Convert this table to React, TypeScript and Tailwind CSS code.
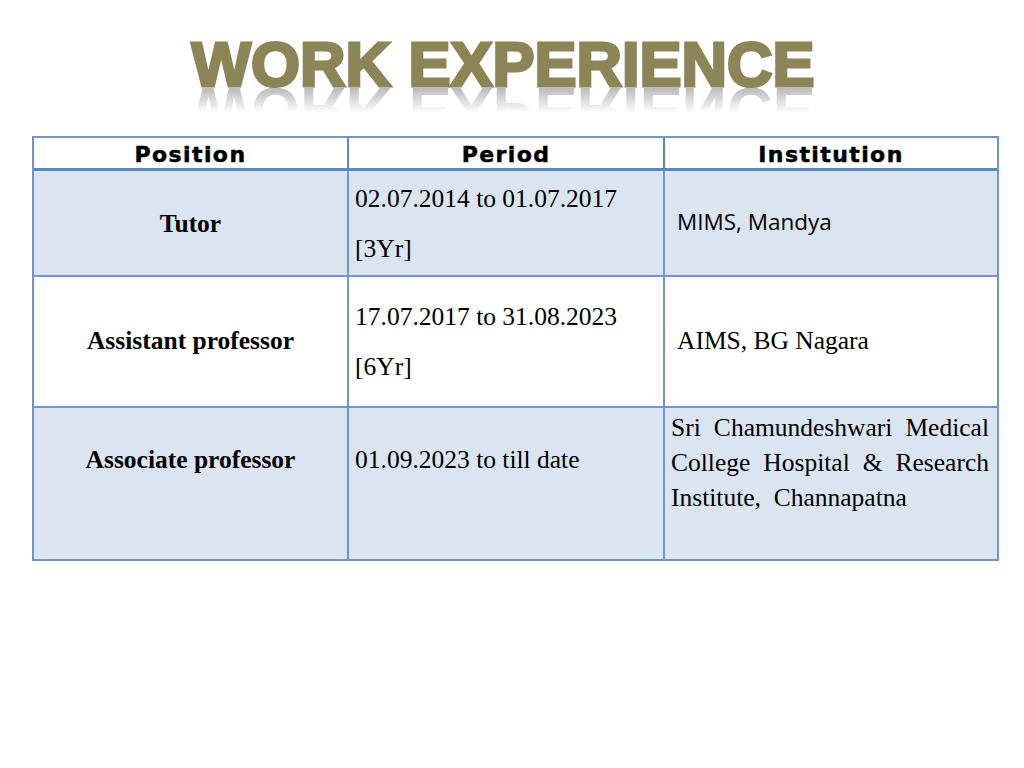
const serif = "[font-family:'Liberation_Serif','Times_New_Roman',serif]";

function Title() {
  return (
    <div className="flex justify-center pt-[33px] pr-[18px] h-[136px]">
      <div className="relative h-[62px]">
        <h1 className="relative z-10 text-[63px] leading-[62px] font-bold whitespace-nowrap text-[#8b8557] [font-family:'Liberation_Sans',Arial,sans-serif] [-webkit-text-stroke:3px_#8b8557] [text-shadow:0_0_1px_#5f5b3c]">
          WORK EXPERIENCE
        </h1>
        <div
          aria-hidden
          className="absolute left-0 top-0 text-[63px] leading-[62px] font-bold whitespace-nowrap origin-[50%_54px] -scale-y-100 text-transparent bg-clip-text bg-[linear-gradient(to_bottom,rgba(255,255,255,0)_28px,rgba(165,165,165,0.8)_54px)] [font-family:'Liberation_Sans',Arial,sans-serif]"
        >
          WORK EXPERIENCE
        </div>
      </div>
    </div>
  );
}

const head =
  "flex items-center justify-center pt-[2px] text-[22px] font-bold tracking-[1.4px] text-black [font-family:'DejaVu_Sans',sans-serif] [-webkit-text-stroke:0.5px_#000]";

export default function App() {
  return (
    <div className="w-[1024px] h-[768px] bg-white overflow-hidden">
      <Title />
      <div className="ml-[32px] w-[967px] border-2 border-[#7095c8] grid grid-cols-[315px_316px_332px]">
        {/* header */}
        <div className={`${head} h-[33px] border-r-2 border-b-[3px] border-[#5d87c2]`}>Position</div>
        <div className={`${head} h-[33px] border-r-2 border-b-[3px] border-[#5d87c2]`}>Period</div>
        <div className={`${head} h-[33px] border-b-[3px] border-[#5d87c2]`}>Institution</div>

        {/* row 1 */}
        <div className={`${serif} h-[106px] bg-[#dbe5f1] border-r-2 border-b-2 border-[#7095c8] flex items-center justify-center pt-[2px] text-[25.5px] font-bold`}>
          Tutor
        </div>
        <div className={`${serif} h-[106px] bg-[#dbe5f1] border-r-2 border-b-2 border-[#7095c8] flex flex-col justify-center gap-[22px] pl-[6px] pt-[2px] text-[25.5px] leading-[28px]`}>
          <span>02.07.2014 to 01.07.2017</span>
          <span>[3Yr]</span>
        </div>
        <div className="h-[106px] bg-[#dbe5f1] border-b-2 border-[#7095c8] flex items-center pl-[12px] pb-[2px] text-[22.5px] [font-family:'Open_Sans',sans-serif]">
          MIMS, Mandya
        </div>

        {/* row 2 */}
        <div className={`${serif} h-[131px] bg-white border-r-2 border-b-2 border-[#7095c8] flex items-center justify-center text-[25.5px] font-bold`}>
          Assistant professor
        </div>
        <div className={`${serif} h-[131px] bg-white border-r-2 border-b-2 border-[#7095c8] flex flex-col justify-center gap-[22px] pl-[6px] text-[25.5px] leading-[28px]`}>
          <span>17.07.2017 to 31.08.2023</span>
          <span>[6Yr]</span>
        </div>
        <div className={`${serif} h-[131px] bg-white border-b-2 border-[#7095c8] flex items-center pl-[12px] text-[25.5px]`}>
          AIMS, BG Nagara
        </div>

        {/* row 3 */}
        <div className={`${serif} h-[151px] bg-[#dbe5f1] border-r-2 border-[#7095c8] flex justify-center pt-[38px] text-[25.5px] leading-[28px] font-bold`}>
          Associate professor
        </div>
        <div className={`${serif} h-[151px] bg-[#dbe5f1] border-r-2 border-[#7095c8] pl-[6px] pt-[38px] text-[25.5px] leading-[28px]`}>
          01.09.2023 to till date
        </div>
        <div className={`${serif} h-[151px] bg-[#dbe5f1] pl-[6px] pr-[8px] pt-[2px] text-[25.5px] leading-[35px] text-justify [text-align-last:left]`}>
          Sri Chamundeshwari Medical College Hospital &amp; Research Institute,&nbsp; Channapatna
        </div>
      </div>
    </div>
  );
}
